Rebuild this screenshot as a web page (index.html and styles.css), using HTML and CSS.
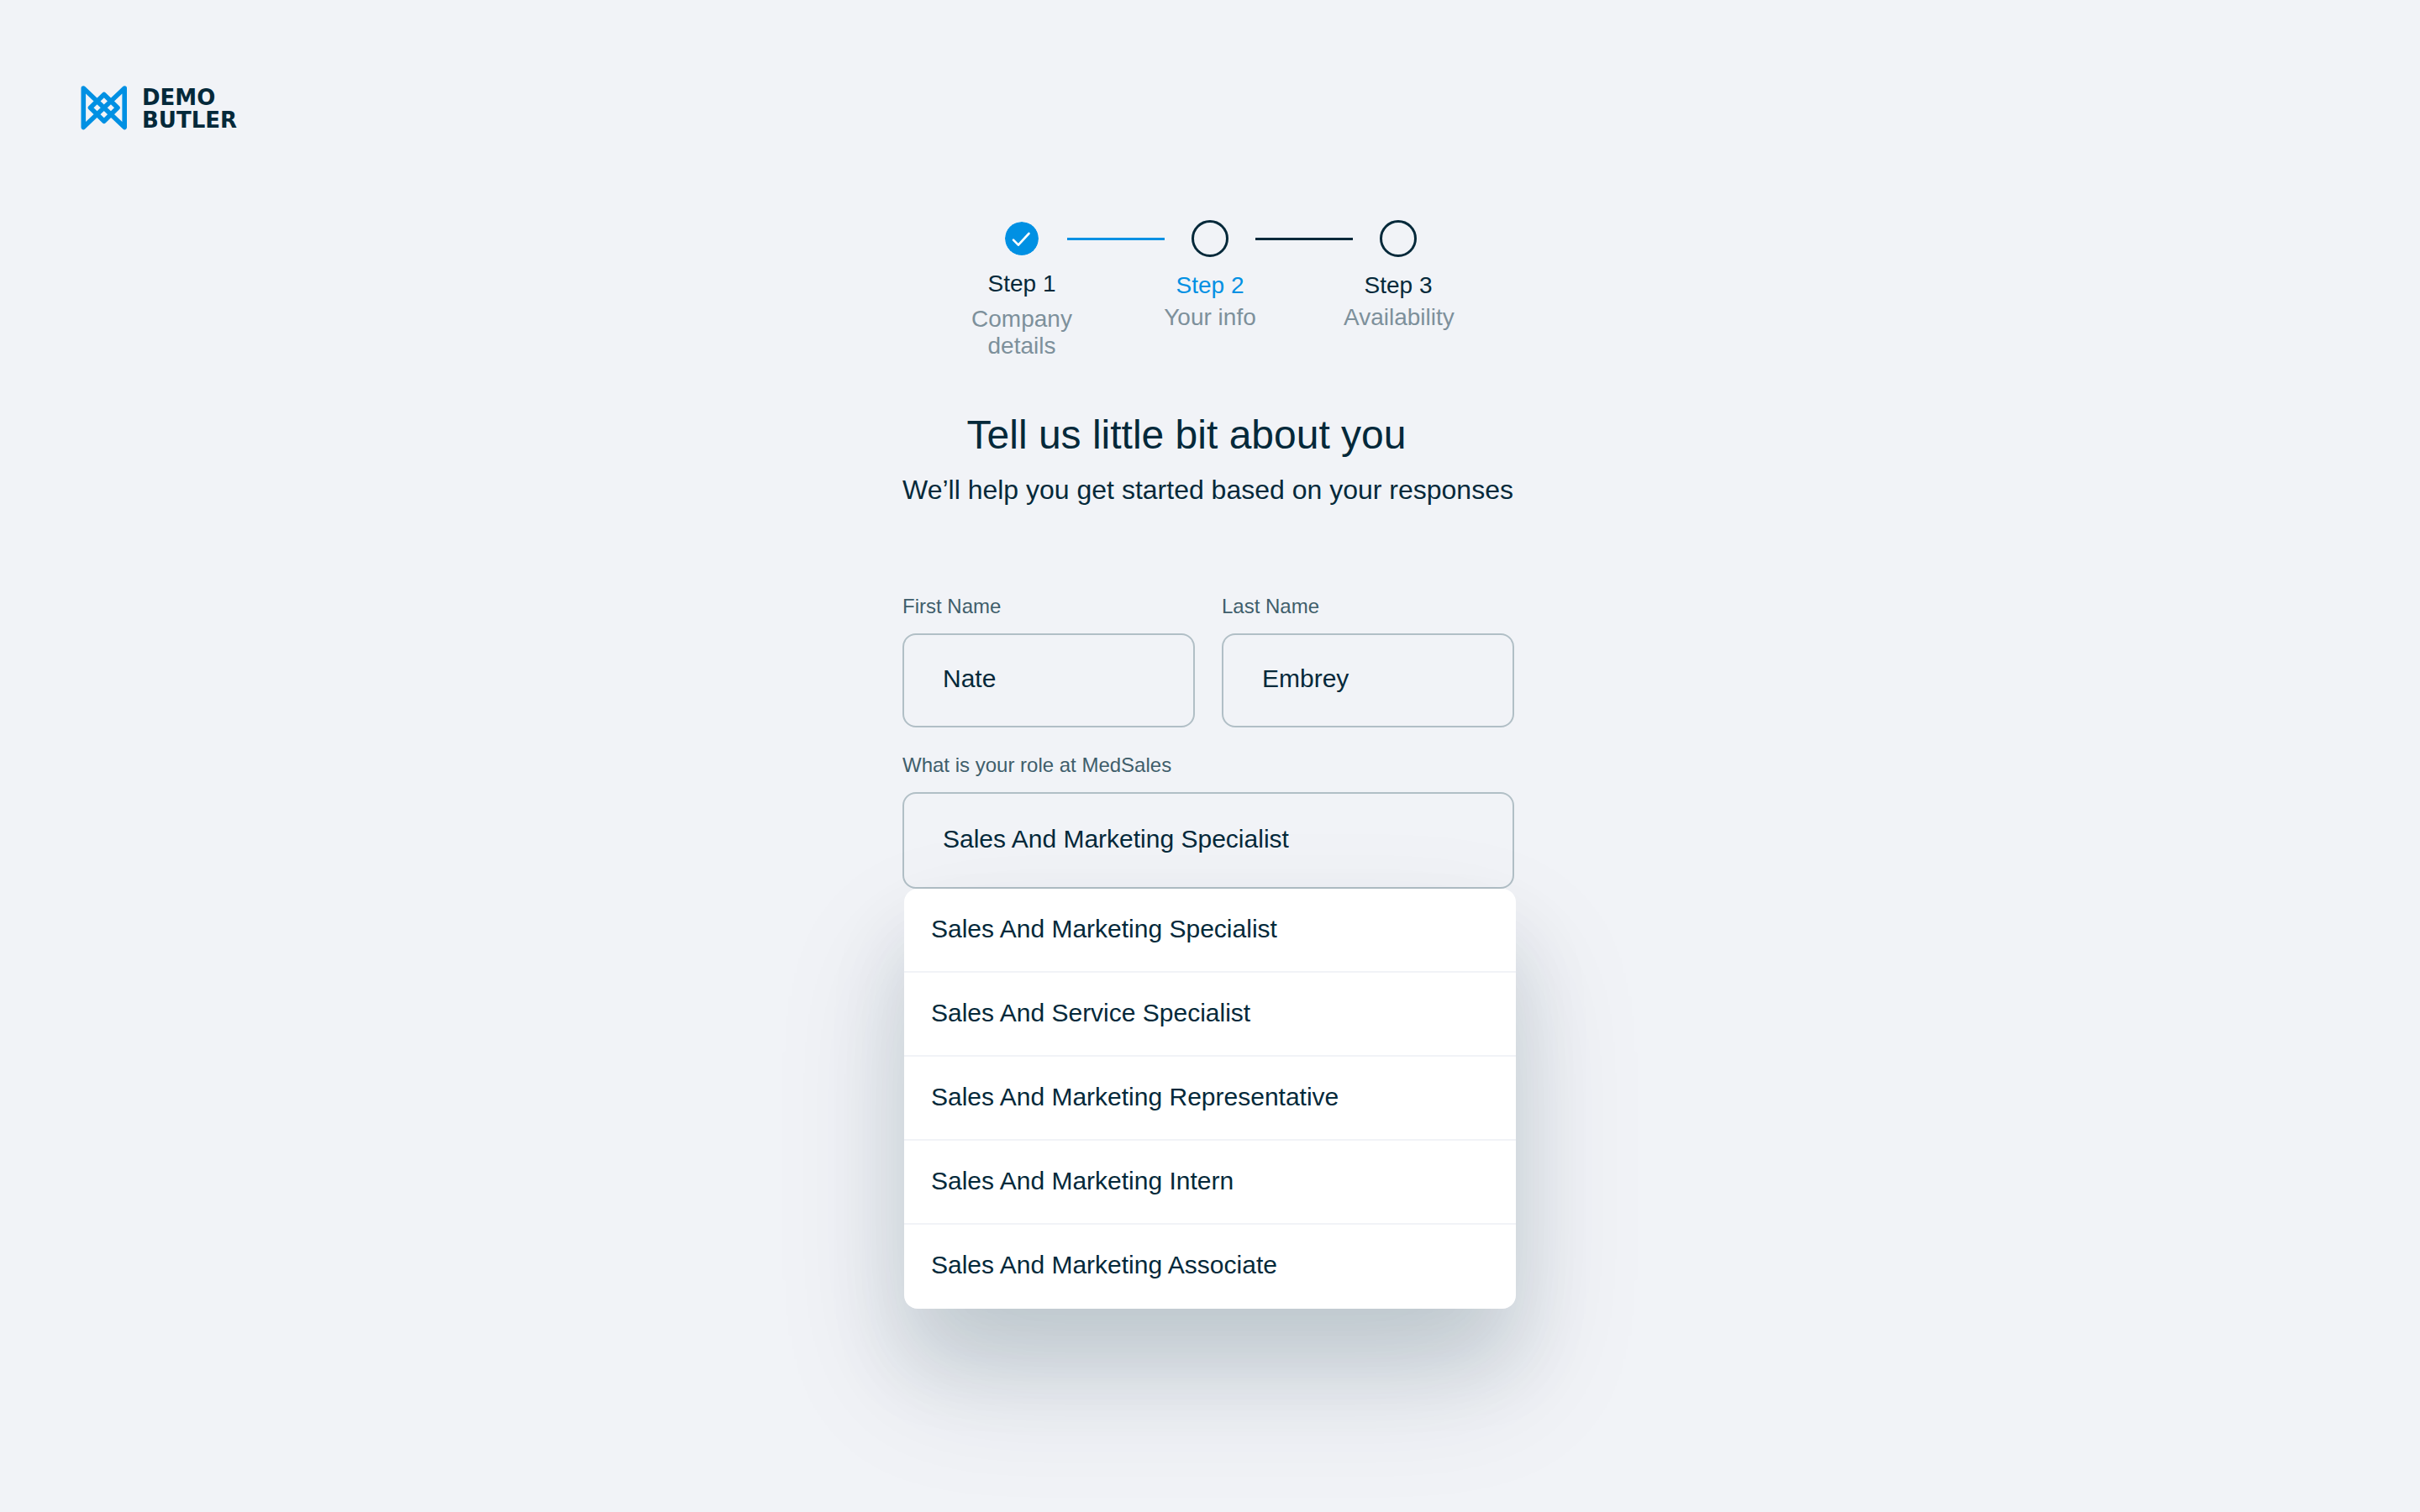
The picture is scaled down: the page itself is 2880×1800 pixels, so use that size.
FILE: index.html
```html
<!DOCTYPE html>
<html lang="en">
<head>
<meta charset="utf-8">
<title>Demo Butler – Your info</title>
<link rel="stylesheet" href="styles.css">
</head>
<body>
<header class="header">
  <a class="logo" href="#" aria-label="Demo Butler">
    <svg class="logo-mark" viewBox="0 0 56 52" aria-hidden="true">
      <path d="M3.300 49.500 V3 L52.200 49.500 V3 Z M27.800 10.500 L44 26.300 L27.800 42.200 L11.500 26.300 Z"/>
    </svg>
    <span class="logo-text">DEMO<br>BUTLER</span>
  </a>
</header>
<main class="main">
  <ol class="steps">
    <li class="step step-done">
      <svg class="step-icon" viewBox="0 0 40 40" aria-hidden="true">
        <circle cx="20" cy="20" r="20"/>
        <path d="M10 21.700 L15.900 27.700 L28.500 14"/>
      </svg>
      <span class="step-name">Step 1</span>
      <span class="step-text">Company details</span>
    </li>
    <li class="step step-current" aria-current="step">
      <span class="step-icon"></span>
      <span class="step-name">Step 2</span>
      <span class="step-text">Your info</span>
    </li>
    <li class="step">
      <span class="step-icon"></span>
      <span class="step-name">Step 3</span>
      <span class="step-text">Availability</span>
    </li>
  </ol>
  <form class="form">
    <h1 class="title">Tell us little bit about you</h1>
    <p class="subtitle">We’ll help you get started based on your responses</p>
    <div class="row">
      <div class="field">
        <label class="label" for="first">First Name</label>
        <input class="input" id="first" type="text" value="Nate">
      </div>
      <div class="field">
        <label class="label" for="last">Last Name</label>
        <input class="input" id="last" type="text" value="Embrey">
      </div>
    </div>
    <div class="field combo">
      <label class="label" for="role">What is your role at MedSales</label>
      <input class="input input-tall" id="role" type="text" role="combobox" aria-expanded="true" aria-controls="roles" value="Sales And Marketing Specialist">
      <ul class="menu" id="roles" role="listbox">
        <li class="option" role="option" aria-selected="true">Sales And Marketing Specialist</li>
        <li class="option" role="option">Sales And Service Specialist</li>
        <li class="option" role="option">Sales And Marketing Representative</li>
        <li class="option" role="option">Sales And Marketing Intern</li>
        <li class="option" role="option">Sales And Marketing Associate</li>
      </ul>
    </div>
  </form>
</main>
</body>
</html>
```

FILE: styles.css
```css
* {
  box-sizing: border-box;
}

body {
  margin: 0;
  min-height: 100vh;
  background: #f1f3f7;
  color: #04293a;
  font-family: "Liberation Sans", Arial, sans-serif;
}

.header {
  display: flex;
  padding: 102px 96px 0;
}

.logo {
  display: flex;
  align-items: flex-start;
  gap: 17px;
  height: 52px;
  color: inherit;
  text-decoration: none;
}

.logo-mark {
  width: 56px;
  height: 52px;
  overflow: visible;
  fill: none;
  stroke: #0090e3;
  stroke-width: 5.6;
  stroke-linejoin: round;
}

.logo-text {
  padding-top: 1px;
  font: 700 26px/27px "DejaVu Sans", sans-serif;
}

.main {
  display: flex;
  flex-direction: column;
  align-items: center;
  padding-top: 108px;
}

.steps {
  display: grid;
  grid-template-columns: repeat(3, 224px);
  margin: 0;
  padding: 0;
  list-style: none;
}

.step {
  position: relative;
  display: flex;
  flex-direction: column;
  align-items: center;
  font-size: 28px;
  line-height: 32px;
  text-align: center;
}

.step-icon {
  width: 44px;
  height: 44px;
  margin-bottom: 18px;
  border: 3px solid #04293a;
  border-radius: 50%;
}

.step + .step::before {
  content: "";
  position: absolute;
  top: 21px;
  right: 166px;
  width: 116px;
  height: 3px;
  background: #04293a;
}

.step-done + .step::before {
  background: #0090e3;
}

.step-done .step-icon {
  width: 40px;
  height: 40px;
  margin-top: 2px;
  border: 0;
  fill: #0090e3;
}

.step-icon path {
  fill: none;
  stroke: #fff;
  stroke-width: 2.6;
  stroke-linecap: round;
  stroke-linejoin: round;
}

.step-name {
  margin-bottom: 6px;
}

.step-done .step-name {
  margin-bottom: 10px;
}

.step-current .step-name {
  color: #0090e3;
}

.step-text {
  width: 130px;
  color: #7d909b;
}

.form {
  width: 732px;
  max-width: 100%;
  padding-right: 4px;
}

.title {
  margin: 62px 52px 0 0;
  font-size: 48px;
  font-weight: 400;
  line-height: 56px;
  text-align: center;
}

.subtitle {
  margin: 19px 0 0;
  font-size: 32px;
  line-height: 36px;
  white-space: nowrap;
}

.row {
  display: grid;
  grid-template-columns: 1fr 1fr;
  gap: 32px;
  margin: 107px 0 31px;
}

.field {
  display: flex;
  flex-direction: column;
  gap: 18px;
}

.label {
  color: #3f5e6b;
  font-size: 24px;
  line-height: 28px;
}

.input {
  width: 100%;
  height: 112px;
  padding: 0 46px 4px;
  border: 2px solid #b1bfc6;
  border-radius: 16px;
  background: transparent;
  color: inherit;
  font: 30px/36px "Liberation Sans", Arial, sans-serif;
  outline: 0;
}

.input-tall {
  height: 115px;
}

.combo {
  position: relative;
}

.menu {
  position: absolute;
  top: 100%;
  left: 2px;
  width: 100%;
  margin: 0;
  padding: 0;
  border-radius: 16px;
  background: #fff;
  box-shadow:
    0 80px 160px rgba(4, 41, 58, 0.13),
    0 64px 96px rgba(4, 41, 58, 0.11);
  list-style: none;
}

.option {
  padding: 30px 32px 32px;
  border-bottom: 2px solid #f1f3f7;
  font-size: 30px;
  line-height: 36px;
}

.option:last-child {
  border-bottom: 0;
  padding-bottom: 34px;
}
```
